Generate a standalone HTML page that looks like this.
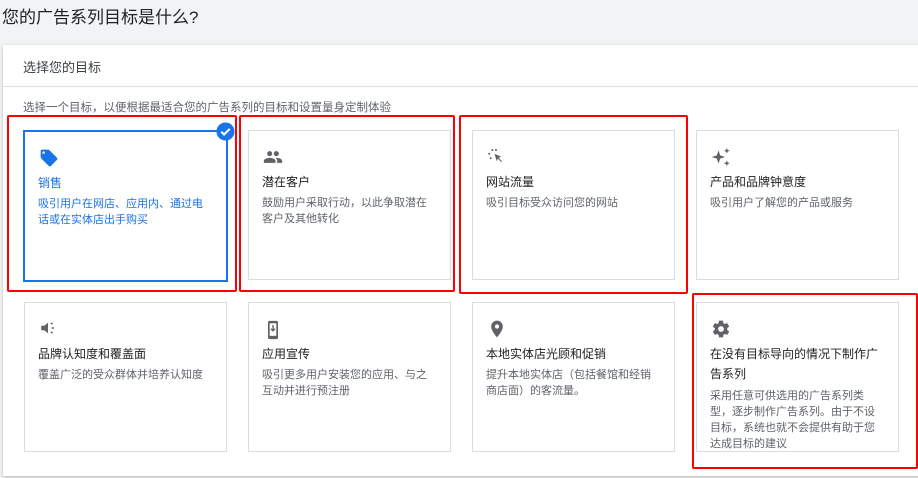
<!DOCTYPE html><html><head><meta charset="utf-8"><style>
body{margin:0;width:918px;height:478px;background:#f1f3f4;font-family:"Liberation Sans","Noto Sans CJK SC",sans-serif;position:relative;overflow:hidden;color:#3c4043}
.t{position:absolute;left:2px;top:3px;font-size:17px;color:#202124}
.panel{position:absolute;left:3px;top:45px;width:920px;height:431px;background:#fff;box-shadow:0 1px 3px rgba(0,0,0,.25)}
.h{position:absolute;left:23px;top:57px;font-size:13px;color:#3c4043}
.div{position:absolute;left:3px;top:86px;width:915px;height:1px;background:#e0e0e0}
.s{position:absolute;left:23px;top:99px;font-size:11.5px;color:#5f6368}
.c{position:absolute;width:203px;height:150px;border:1px solid #dadce0;box-sizing:border-box;background:#fff}
.c svg{position:absolute;left:14px;top:16px}
.c .n{position:absolute;left:13px;top:41px;font-size:12px;color:#202124;width:178px;line-height:20px}
.c .d{position:absolute;left:13px;top:64px;font-size:11px;color:#5f6368;width:168px;line-height:16px}
.sel{border:2px solid #1a73e8}.sel .n,.sel .d{color:#1a73e8}
.r{position:absolute;border:2px solid #f00;border-radius:2px}
</style></head><body>
<div class="t">您的广告系列目标是什么?</div>
<div class="panel"></div>
<div class="h">选择您的目标</div><div class="div"></div>
<div class="s">选择一个目标，以便根据最适合您的广告系列的目标和设置量身定制体验</div>

<div class="c sel" style="left:23px;top:130px;width:205px;height:152px"><svg width="20" height="20" viewBox="0 0 24 24"><path fill="#1a73e8" d="M21.4 11.6l-9-9A2 2 0 0 0 11 2H4a2 2 0 0 0-2 2v7c0 .55.22 1.05.59 1.42l9 9a2 2 0 0 0 2.820 0l7-7a2 2 0 0 0 0-2.82zM5.5 7A1.5 1.5 0 1 1 5.5 4a1.5 1.5 0 0 1 0 3z"/></svg><div class="n">销售</div><div class="d">吸引用户在网店、应用内、通过电话或在实体店出手购买</div></div>
<svg style="position:absolute;left:216px;top:122px" width="19" height="19" viewBox="0 0 20 20"><circle cx="10" cy="10" r="9.5" fill="#1a73e8"/><path d="M5.5 10.2l3 3 6-6" stroke="#fff" stroke-width="2.2" fill="none"/></svg>

<div class="c" style="left:248px;top:130px"><svg width="20" height="20" viewBox="0 0 24 24"><path fill="#5f6368" d="M16 11c1.66 0 3-1.34 3-3s-1.340-3-3-3-3 1.34-3 3 1.34 3 3 3zm-8 0c1.66 0 3-1.34 3-3S9.66 5 8 5 5 6.34 5 8s1.34 3 3 3zm0 2c-2.33 0-7 1.17-7 3.5V19h14v-2.5C15 14.17 10.33 13 8 13zm8 0c-.29 0-.62.02-.97.05C16.19 13.890 17 15 17 16.5V19h6v-2.5c0-2.33-4.67-3.5-7-3.5z"/></svg><div class="n">潜在客户</div><div class="d">鼓励用户采取行动，以此争取潜在客户及其他转化</div></div>

<div class="c" style="left:472px;top:130px"><svg width="18" height="18" viewBox="0 0 24 24"><path fill="#5f6368" d="M10 9l9 4-3.5 1.5L20 19l-1 1-4.5-4.5L13 19z"/><circle cx="7" cy="4" r="1.3" fill="#5f6368"/><circle cx="3" cy="9" r="1.3" fill="#5f6368"/><circle cx="5" cy="15" r="1.3" fill="#5f6368"/><circle cx="12" cy="4" r="1.3" fill="#5f6368"/></svg><div class="n">网站流量</div><div class="d">吸引目标受众访问您的网站</div></div>

<div class="c" style="left:696px;top:130px"><svg width="20" height="20" viewBox="0 0 24 24"><path fill="#5f6368" d="M9 4l2 6 6 2-6 2-2 6-2-6-6-2 6-2zM19 1l1 2.5 2.5 1-2.5 1L19 8l-1-2.5-2.5-1 2.5-1zM19 16l1 2.5 2.5 1-2.5 1L19 23l-1-2.5-2.5-1 2.5-1z"/></svg><div class="n">产品和品牌钟意度</div><div class="d">吸引用户了解您的产品或服务</div></div>

<div class="c" style="left:24px;top:302px"><svg width="18" height="18" viewBox="0 0 24 24"><path fill="#5f6368" d="M3 9v6h4l5 4V5L7 9z"/><path d="M16 7l2-2M17 12h3M16 17l2 2" stroke="#5f6368" stroke-width="2"/></svg><div class="n">品牌认知度和覆盖面</div><div class="d">覆盖广泛的受众群体并培养认知度</div></div>

<div class="c" style="left:248px;top:302px"><svg width="20" height="22" viewBox="0 0 24 24"><rect x="6" y="1" width="12" height="22" rx="2" fill="#5f6368"/><rect x="8" y="4" width="8" height="15" fill="#fff"/><path d="M12 6v7M9.5 10.5L12 13l2.5-2.5" stroke="#5f6368" stroke-width="1.6" fill="none"/></svg><div class="n">应用宣传</div><div class="d">吸引更多用户安装您的应用、与之互动并进行预注册</div></div>

<div class="c" style="left:472px;top:302px"><svg width="20" height="20" viewBox="0 0 24 24"><path fill="#5f6368" d="M12 2C8.13 2 5 5.13 5 9c0 5.25 7 13 7 13s7-7.75 7-13c0-3.87-3.13-7-7-7zm0 9.5a2.5 2.5 0 1 1 0-5 2.5 2.5 0 0 1 0 5z"/></svg><div class="n">本地实体店光顾和促销</div><div class="d">提升本地实体店（包括餐馆和经销商店面）的客流量。</div></div>

<div class="c" style="left:696px;top:302px"><svg width="20" height="20" viewBox="0 0 24 24"><path fill="#5f6368" d="M19.4 13c.04-.33.06-.66.06-1s-.02-.67-.06-1l2.1-1.65c.2-.15.25-.42.12-.64l-2-3.46c-.12-.22-.39-.3-.61-.22l-2.49 1c-.52-.4-1.08-.73-1.690-.98l-.38-2.650A.49.49 0 0 0 14 2h-4c-.25 0-.46.18-.49.42l-.38 2.65c-.61.25-1.17.59-1.69.98l-2.49-1c-.23-.09-.49 0-.61.22l-2 3.46c-.13.22-.07.49.12.64L4.57 11c-.04.33-.07.67-.07 1s.03.67.07 1l-2.11 1.65c-.19.15-.24.42-.12.64l2 3.46c.12.22.39.3.61.22l2.49-1c.52.4 1.08.73 1.69.98l.38 2.65c.03.24.24.42.49.42h4c.25 0 .46-.18.49-.42l.38-2.65c.61-.25 1.17-.59 1.69-.98l2.49 1c.23.09.49 0 .61-.22l2-3.46c.12-.22.07-.49-.12-.64L19.4 13zM12 15.5a3.5 3.5 0 1 1 0-7 3.5 3.5 0 0 1 0 7z"/></svg><div class="n">在没有目标导向的情况下制作广告系列</div><div class="d" style="top:85px;width:185px;line-height:16px;white-space:nowrap">采用任意可供选用的广告系列类<br>型，逐步制作广告系列。由于不设<br>目标，系统也就不会提供有助于您<br>达成目标的建议</div></div>

<div class="r" style="left:7px;top:115px;width:226px;height:173px"></div>
<div class="r" style="left:239px;top:115px;width:212px;height:173px"></div>
<div class="r" style="left:459px;top:115px;width:225px;height:175px"></div>
<div class="r" style="left:692px;top:293px;width:222px;height:172px"></div>
</body></html>
